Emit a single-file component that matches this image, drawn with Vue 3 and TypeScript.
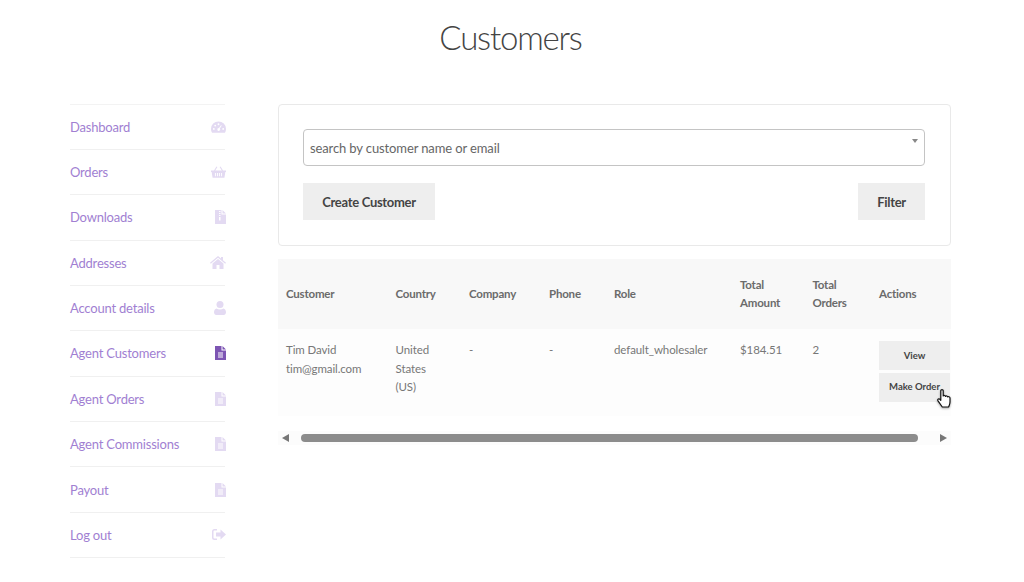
<script setup lang="ts">
interface NavItem {
  label: string;
  icon: string;
  active?: boolean;
}

const nav: NavItem[] = [
  { label: "Dashboard", icon: "gauge" },
  { label: "Orders", icon: "basket" },
  { label: "Downloads", icon: "zip" },
  { label: "Addresses", icon: "home" },
  { label: "Account details", icon: "user" },
  { label: "Agent Customers", icon: "file", active: true },
  { label: "Agent Orders", icon: "file" },
  { label: "Agent Commissions", icon: "file" },
  { label: "Payout", icon: "file" },
  { label: "Log out", icon: "logout" },
];
</script>

<template>
  <div class="page">
    <h1>Customers</h1>
    <div class="layout">
      <nav class="side">
        <a v-for="item in nav" :key="item.label" class="nav-item" :class="{ active: item.active }">
          <span>{{ item.label }}</span>
          <svg v-if="item.icon === 'gauge'" class="ico gauge" viewBox="0 0 16 12">
            <path fill-rule="evenodd" d="M8 0a8 8 0 0 1 8 8c0 1.500-.4 2.800-1.100 4H1.100A8 8 0 0 1 0 8a8 8 0 0 1 8-8zM3 7a1 1 0 1 0 0 2 1 1 0 0 0 0-2zm1.500-3.500a1 1 0 1 0 0 2 1 1 0 0 0 0-2zM8 2a1 1 0 1 0 0 2 1 1 0 0 0 0-2zm2.600 2L8.400 7.200a1.500 1.500 0 1 0 1 .5L11.500 4.500zM13 7a1 1 0 1 0 0 2 1 1 0 0 0 0-2z" />
          </svg>
          <svg v-else-if="item.icon === 'basket'" class="ico basket" viewBox="0 0 16 12">
            <path fill-rule="evenodd" d="M0 4.500h3.200L5.800 0l1 .6L4.500 4.500h7L9.200.6l1-.6 2.600 4.500H16V6h-.7l-1 6H1.700l-1-6H0zM4.200 7v3.500h1V7zm2.300 0v3.500h1V7zm2 0v3.500h1V7zm2.300 0v3.500h1V7z" />
          </svg>
          <svg v-else-if="item.icon === 'zip'" class="ico doc" viewBox="0 0 11 14">
            <path fill-rule="evenodd" d="M0 0h6.500v4.500H11V14H0zM7.500 0 11 3.500H7.500zM4 1v1h1.500V1zm0 2v1h1.500V3zm0 2v1h1.500V5zm0 2v3.500h1.500V7z" />
          </svg>
          <svg v-else-if="item.icon === 'home'" class="ico home" viewBox="0 0 16 13">
            <path d="M8 0l3 2.500V1h2v3.300L16 6.800l-.8.900L8 1.800.8 7.700 0 6.800z" />
            <path d="M8 3l5.500 4.500V13H9.500V9h-3v4h-4V7.500z" />
          </svg>
          <svg v-else-if="item.icon === 'user'" class="ico user" viewBox="0 0 12 14">
            <circle cx="6" cy="3.500" r="3.500" />
            <path d="M2.500 7.500C3.500 8.200 4.700 8.600 6 8.600s2.500-.4 3.500-1.100C11 7.700 12 9.300 12 11.300c0 1.600-1 2.700-2.200 2.700H2.200C1 14 0 12.900 0 11.300 0 9.300 1 7.700 2.500 7.500z" />
          </svg>
          <svg v-else-if="item.icon === 'file'" class="ico doc" viewBox="0 0 11 14">
            <path fill-rule="evenodd" d="M0 0h6.500v4.500H11V14H0zM7.500 0 11 3.500H7.500zM3 6.500v1h5v-1zm0 2v1h5v-1zm0 2v1h5v-1z" />
          </svg>
          <svg v-else class="ico logout" viewBox="0 0 14 11">
            <path d="M5 0v1.500H2.500A1 1 0 0 0 1.500 2.500v6a1 1 0 0 0 1 1H5V11H2.500A2.500 2.500 0 0 1 0 8.500v-6A2.500 2.500 0 0 1 2.500 0z" />
            <path d="M8.500 .5 14 5.500 8.500 10.500V7.500H4v-4h4.500z" />
          </svg>
        </a>
      </nav>

      <main class="main">
        <section class="filter-card">
          <div class="select">
            <span>search by customer name or email</span>
            <i class="caret"></i>
          </div>
          <div class="actions">
            <button class="btn create">Create Customer</button>
            <button class="btn filter">Filter</button>
          </div>
        </section>

        <div class="table-wrap">
          <table>
            <colgroup>
              <col style="width: 109.500px" />
              <col style="width: 73.500px" />
              <col style="width: 80px" />
              <col style="width: 65px" />
              <col style="width: 126px" />
              <col style="width: 72.500px" />
              <col style="width: 66.500px" />
              <col style="width: 80px" />
            </colgroup>
            <thead>
              <tr>
                <th>Customer</th>
                <th>Country</th>
                <th>Company</th>
                <th>Phone</th>
                <th>Role</th>
                <th>Total Amount</th>
                <th>Total Orders</th>
                <th>Actions</th>
              </tr>
            </thead>
            <tbody>
              <tr>
                <td>Tim David<br />tim@gmail.com</td>
                <td class="cell-country">United States (US)</td>
                <td>-</td>
                <td>-</td>
                <td>default_wholesaler</td>
                <td>$184.51</td>
                <td>2</td>
                <td class="cell-actions">
                  <button class="btn small">View</button>
                  <button class="btn small">Make Order</button>
                </td>
              </tr>
            </tbody>
          </table>

          <svg class="cursor" viewBox="0 0 14 20">
            <path fill="#fff" stroke="#111" stroke-width="1.200" stroke-linejoin="round" d="M3.800 1.800c0-1.500 2.400-1.500 2.400 0V7c.5-.8 2.200-.7 2.300.4.600-.7 2.100-.6 2.200.5.600-.6 2.300-.3 2.300 1.100V13c0 2.200-.8 3.300-1.400 5H5.300L1 11.800c-.9-1.500.9-2.700 2-1.500l.8 1z" />
          </svg>
        </div>

        <div class="scrollbar">
          <i class="arrow left"></i>
          <div class="thumb"></div>
          <i class="arrow right"></i>
        </div>
      </main>
    </div>
  </div>
</template>

<style scoped>
.page {
  width: 881px;
  margin-left: 70px;
  font-family: Lato, "Open Sans", sans-serif;
  color: #777;
}

h1 {
  margin: 0;
  height: 104px;
  padding-top: 13px;
  box-sizing: border-box;
  text-align: center;
  font-weight: 300;
  font-size: 33px;
  letter-spacing: -1.200px;
  line-height: 48px;
  color: #444;
}

.layout {
  display: flex;
  gap: 53px;
  align-items: flex-start;
}

.side {
  width: 155px;
  flex-shrink: 0;
  margin-top: -0.5px;
  border-top: 1px solid #f3f3f3;
}

.nav-item {
  display: flex;
  justify-content: space-between;
  align-items: center;
  height: 45.360px;
  box-sizing: border-box;
  border-bottom: 1px solid #f0f0f0;
  font-size: 13px;
  letter-spacing: -0.200px;
  color: #a17fd2;
}

.ico {
  fill: #e3daf2;
  flex-shrink: 0;
  margin-right: -1px;
}

.active .ico {
  fill: #7d55b3;
}

.gauge,
.basket {
  width: 15px;
  height: 12px;
}

.home {
  width: 16px;
  height: 13px;
}

.doc {
  width: 11px;
  height: 14px;
}

.user {
  width: 12px;
  height: 14px;
}

.logout {
  width: 14px;
  height: 11px;
}

.main {
  width: 673px;
  position: relative;
}

.filter-card {
  height: 142px;
  box-sizing: border-box;
  padding: 24px 25px 0 24px;
  border: 1px solid #e9e9e9;
  border-radius: 4px;
}

.select {
  position: relative;
  display: flex;
  align-items: center;
  height: 37px;
  box-sizing: border-box;
  padding-left: 6px;
  border: 1px solid #c4c4c4;
  border-radius: 4px;
  font-size: 13px;
  letter-spacing: -0.120px;
  color: #666;
}

.caret {
  position: absolute;
  top: 9px;
  right: 6px;
  border-left: 3px solid transparent;
  border-right: 3px solid transparent;
  border-top: 4px solid #888;
}

.actions {
  display: flex;
  justify-content: space-between;
  margin-top: 17px;
}

.btn {
  height: 37px;
  padding: 0;
  border: none;
  background: #eeeeee;
  color: #444;
  font-family: inherit;
  font-size: 13px;
  letter-spacing: -0.300px;
  font-weight: 700;
}

.create {
  width: 132px;
}

.filter {
  width: 67px;
}

.table-wrap {
  position: relative;
  margin-top: 13px;
}

table {
  width: 673px;
  table-layout: fixed;
  border-collapse: collapse;
  font-size: 11.500px;
  letter-spacing: -0.100px;
  line-height: 18.500px;
}

th {
  height: 70px;
  box-sizing: border-box;
  padding: 0 8px;
  background: #f8f8f8;
  text-align: left;
  font-weight: 700;
  letter-spacing: -0.200px;
  color: #6b6b6b;
}

td {
  height: 87px;
  padding: 12px 8px 0;
  box-sizing: border-box;
  vertical-align: top;
  background: #fdfdfd;
  color: #777;
}

.cell-country {
  padding-right: 24px;
}

.cell-actions {
  padding: 12px 1px 0 8px;
}

.small {
  display: block;
  width: 71px;
  height: 29px;
  padding-bottom: 1px;
  margin-bottom: 2.500px;
  font-size: 9.500px;
  letter-spacing: 0;
}

.cursor {
  position: absolute;
  left: 659px;
  top: 130px;
  width: 14px;
  height: 20px;
  filter: drop-shadow(0 1px 1px rgba(0, 0, 0, 0.35));
}

.scrollbar {
  display: flex;
  align-items: center;
  justify-content: space-between;
  height: 14px;
  margin-top: 15px;
  padding: 0 4px;
  background: #fcfcfc;
}

.thumb {
  width: 617px;
  height: 8px;
  border-radius: 4px;
  background: #8c8c8c;
}

.arrow {
  width: 0;
  height: 0;
  border-top: 4.500px solid transparent;
  border-bottom: 4.500px solid transparent;
}

.arrow.left {
  border-right: 7px solid #777;
  margin-right: 5px;
}

.arrow.right {
  border-left: 7px solid #777;
  margin-left: 15px;
}
</style>
